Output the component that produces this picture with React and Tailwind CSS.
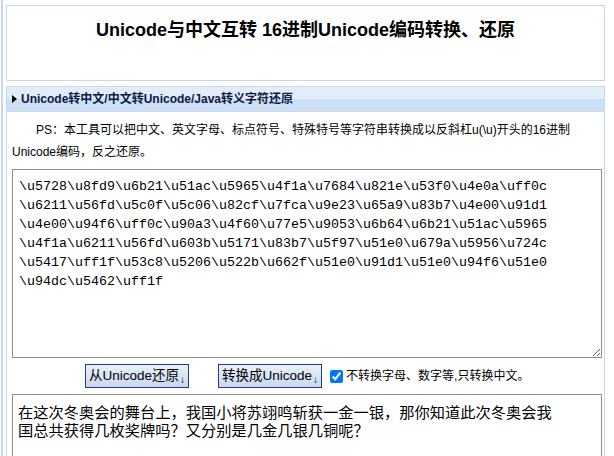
import React, { useState } from 'react';

const ENCODED = [
  '\\u5728\\u8fd9\\u6b21\\u51ac\\u5965\\u4f1a\\u7684\\u821e\\u53f0\\u4e0a\\uff0c',
  '\\u6211\\u56fd\\u5c0f\\u5c06\\u82cf\\u7fca\\u9e23\\u65a9\\u83b7\\u4e00\\u91d1',
  '\\u4e00\\u94f6\\uff0c\\u90a3\\u4f60\\u77e5\\u9053\\u6b64\\u6b21\\u51ac\\u5965',
  '\\u4f1a\\u6211\\u56fd\\u603b\\u5171\\u83b7\\u5f97\\u51e0\\u679a\\u5956\\u724c',
  '\\u5417\\uff1f\\u53c8\\u5206\\u522b\\u662f\\u51e0\\u91d1\\u51e0\\u94f6\\u51e0',
  '\\u94dc\\u5462\\uff1f',
].join('\n');

const PLAIN = '在这次冬奥会的舞台上，我国小将苏翊鸣斩获一金一银，那你知道此次冬奥会我\n国总共获得几枚奖牌吗？又分别是几金几银几铜呢？';

const ActionButton = ({ children }) => (
  <button className="h-[24px] px-[3px] flex items-end border border-[#1c3c8e] bg-linear-to-b from-[#e9f0fa] to-[#c9d8ee] text-[13.5px] leading-[22px] text-black">
    <span>{children}</span>
    <span className="text-[10px] leading-[14px] ml-[1px]">↓</span>
  </button>
);

export default function App() {
  const [encoded, setEncoded] = useState(ENCODED);
  const [plain, setPlain] = useState(PLAIN);
  const [onlyChinese, setOnlyChinese] = useState(true);

  return (
    <div className="min-h-[456px] bg-white font-['Liberation_Sans','Noto_Sans_CJK_SC',sans-serif] text-black">
      <div className="ml-[1px] min-h-[456px] border-l-2 border-[#c6d8f0] pl-[3px] pt-[5px]">
        {/* title box */}
        <div className="w-[599px] h-[76px] border border-[#c6d8f0] pt-[12px] text-center">
          <h1 className="text-[18px] leading-[24px] font-bold">Unicode与中文互转 16进制Unicode编码转换、还原</h1>
        </div>

        {/* tool panel */}
        <div className="mt-[5px] w-[599px] h-[380px] border border-[#c6d8f0] border-b-0">
          <div className="h-[25px] flex items-center pl-[5px] bg-linear-to-b from-[#e3ecf8] from-50% to-[#cddff4] to-50% border-b border-[#c6d8f0]">
            <svg width="5" height="8" viewBox="0 0 5 8" className="mr-[4px]">
              <path d="M0 0 L5 4 L0 8 Z" fill="#000" />
            </svg>
            <span className="text-[12px] font-bold text-[#0c1a45]">Unicode转中文/中文转Unicode/Java转义字符还原</span>
          </div>

          <div className="pl-[5px] pt-[7px]">
            <p className="text-[12px] leading-[22px] indent-[24px]">
              PS：本工具可以把中文、英文字母、标点符号、特殊特号等字符串转换成以反斜杠u(\u)开头的16进制Unicode编码，反之还原。
            </p>

            <textarea
              value={encoded}
              onChange={(e) => setEncoded(e.target.value)}
              spellCheck={false}
              className="mt-[6px] block w-[590px] h-[189px] border border-[#8c8c8c] pl-[6px] pt-[7px] whitespace-pre-wrap font-['Liberation_Mono',monospace] text-[13.33px] leading-[19px] text-black outline-none"
            />

            <div className="mt-[6px] ml-[73px] flex items-center h-[24px]">
              <ActionButton>从Unicode还原</ActionButton>
              <div className="ml-[29px]">
                <ActionButton>转换成Unicode</ActionButton>
              </div>
              <label className="ml-[8px] flex items-center text-[12px]">
                <input
                  type="checkbox"
                  checked={onlyChinese}
                  onChange={(e) => setOnlyChinese(e.target.checked)}
                  className="w-[13px] h-[13px] m-0 mr-[3px]"
                />
                不转换字母、数字等,只转换中文。
              </label>
            </div>

            <textarea
              value={plain}
              onChange={(e) => setPlain(e.target.value)}
              spellCheck={false}
              className="mt-[6px] block w-[590px] h-[80px] border border-[#8c8c8c] pl-[5px] pt-[7px] whitespace-pre-wrap font-['Noto_Sans_CJK_SC',sans-serif] text-[15.25px] leading-[18px] text-black outline-none"
            />
          </div>
        </div>
      </div>
    </div>
  );
}
